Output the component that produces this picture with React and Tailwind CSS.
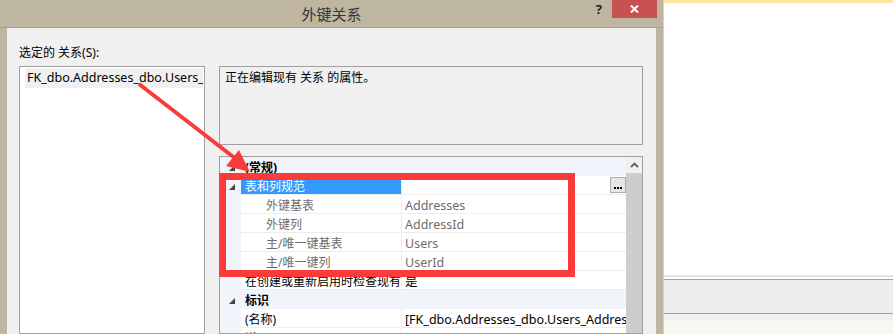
const rows = [
  { kind: "cat", name: "(常规)" },
  { kind: "sel", name: "表和列规范" },
  { kind: "sub", name: "外键基表", value: "Addresses" },
  { kind: "sub", name: "外键列", value: "AddressId" },
  { kind: "sub", name: "主/唯一键基表", value: "Users" },
  { kind: "sub", name: "主/唯一键列", value: "UserId" },
  { kind: "row", name: "在创建或重新启用时检查现有", value: "是" },
  { kind: "cat", name: "标识" },
  { kind: "row", name: "(名称)", value: "[FK_dbo.Addresses_dbo.Users_Addres" },
  { kind: "row", name: "说明", value: "" },
];

function Expander() {
  return (
    <svg width="6" height="6" viewBox="0 0 6 6" className="block">
      <polygon points="6,0 6,6 0,6" fill="#444" />
    </svg>
  );
}

function GridRow({ row }) {
  const isCat = row.kind === "cat";
  const hasToggle = isCat || row.kind === "sel";
  return (
    <div className={`flex h-[19px] shrink-0 ${isCat ? "bg-[#f1f4fa]" : "bg-white"}`}>
      <div className="w-[21px] shrink-0 bg-[#f1f4fa] flex items-center justify-center pl-[3px] pt-[2px]">
        {hasToggle && <Expander />}
      </div>
      {isCat ? (
        <div className="flex-1 border-b border-[#f1f4fa] pl-[4px] leading-[18px] font-bold text-black">
          <span className="relative top-[2px]">{row.name}</span>
        </div>
      ) : (
        <>
          <div
            className={`w-[161px] shrink-0 border-r border-b border-[#ededed] leading-[18px] whitespace-nowrap ${
              row.kind === "sel" ? "bg-[#3399ff] text-white pl-[4px]" : row.kind === "sub" ? "text-[#6d6d6d] pl-[25px]" : "text-black pl-[4px]"
            }`}
          >
            <span className="relative top-[2px]">{row.name}</span>
          </div>
          <div className="flex-1 min-w-0 border-b border-[#ededed] flex items-start pl-[3px] overflow-hidden">
            <span className={`relative top-[2px] whitespace-nowrap text-[12.5px] leading-[18px] ${row.kind === "sub" ? "text-[#6d6d6d]" : "text-black"}`}>{row.value}</span>
            {row.kind === "sel" && (
              <div className="ml-auto mt-[1px] w-[16px] h-[16px] border border-[#adadad] bg-[#e6e6e6] flex items-end justify-center pb-[3px] gap-[1px]">
                <span className="w-[2px] h-[2px] bg-black" />
                <span className="w-[2px] h-[2px] bg-black" />
                <span className="w-[2px] h-[2px] bg-black" />
              </div>
            )}
          </div>
        </>
      )}
    </div>
  );
}

export default function App() {
  return (
    <div className="relative w-[893px] h-[334px] overflow-hidden flex bg-white text-[12px] font-['Noto_Sans','Noto_Sans_CJK_SC',sans-serif] text-black">
      {/* dialog */}
      <div className="w-[663px] h-full shrink-0 bg-[#bfb6a1] flex flex-col">
        <div className="relative h-[28px] shrink-0 flex items-center justify-center border-b border-[#a99f8b]">
          <span className="text-[15px] text-[#353535] font-['Noto_Sans_CJK_SC',sans-serif] leading-none -mt-[1px]">外键关系</span>
          <div className="absolute right-[6px] top-0 flex items-start">
            <span className="mr-[10px] mt-[1px] text-[13px] font-bold text-[#222] leading-[16px]">?</span>
            <div className="w-[45px] h-[18px] bg-[#c75050] flex items-center justify-center">
              <svg width="9" height="8" viewBox="0 0 9 8">
                <path d="M1 0.5 L8 7.5 M8 0.5 L1 7.5" stroke="white" strokeWidth="2" />
              </svg>
            </div>
          </div>
        </div>
        <div className="flex-1 mx-[7px] bg-[#f0f0f0] pt-[16px] pl-[12px] pr-[13px] flex flex-col min-h-0">
          <div className="h-[16px] leading-[16px] pt-[1px]">选定的 关系(S):</div>
          <div className="mt-[6px] flex gap-[14px] flex-1 min-h-0">
            <div className="w-[186px] shrink-0 border border-[#a0a0a0] bg-white p-[1px] pl-[5px] pr-[1px]">
              <div className="h-[20px] bg-[#f0f0f0] flex items-center pl-[2px] overflow-hidden whitespace-nowrap text-[12.5px]">
                FK_dbo.Addresses_dbo.Users_
              </div>
            </div>
            <div className="w-[424px] shrink-0 flex flex-col min-h-0">
              <div className="h-[79px] shrink-0 border border-[#a0a0a0] bg-[#f0f0f0] pt-[3px] px-[5px] leading-[16px]">
                正在编辑现有 关系 的属性。
              </div>
              <div className="mt-[11px] flex-1 min-h-0 border border-[#a0a0a0] flex overflow-hidden">
                <div className="flex-1 min-w-0 flex flex-col">
                  {rows.map((r, i) => (
                    <GridRow key={i} row={r} />
                  ))}
                </div>
                <div className="w-[16px] shrink-0 flex flex-col bg-[#cdcdcd]">
                  <div className="h-[16px] bg-[#f0f0f0] flex items-center justify-center">
                    <svg width="9" height="6" viewBox="0 0 9 6">
                      <path d="M1 5 L4.5 1.5 L8 5" stroke="#606060" strokeWidth="1.8" fill="none" />
                    </svg>
                  </div>
                </div>
              </div>
            </div>
          </div>
        </div>
      </div>

      {/* window behind */}
      <div className="flex-1 h-full flex flex-col border-l border-[#d6d2c6]">
        <div className="h-[3px] bg-[#fde59f]" />
        <div className="h-[272px] bg-white" />
        <div className="h-[2px] bg-[#e2e2e2]" />
        <div className="h-[2px] bg-white" />
        <div className="h-[1px] bg-[#a0a0a0]" />
        <div className="h-[33px] bg-[#eeeeee]" />
        <div className="h-[1px] bg-[#a0a0a0]" />
        <div className="h-[6px] bg-[#f0f0f0]" />
        <div className="flex-1 bg-[#f8f8f3]" />
      </div>

      {/* annotation: red box */}
      <div className="absolute left-[219px] top-[173px] w-[356px] h-[104px] border-[7px] border-[#fb3a3a]" />
      {/* annotation: arrow */}
      <svg className="absolute left-0 top-0 pointer-events-none" width="893" height="334">
        <line x1="139" y1="84" x2="236" y2="159" stroke="#f83b3b" strokeWidth="4" />
        <polygon points="250,172 226,166 239,150" fill="#f83b3b" />
      </svg>
    </div>
  );
}
